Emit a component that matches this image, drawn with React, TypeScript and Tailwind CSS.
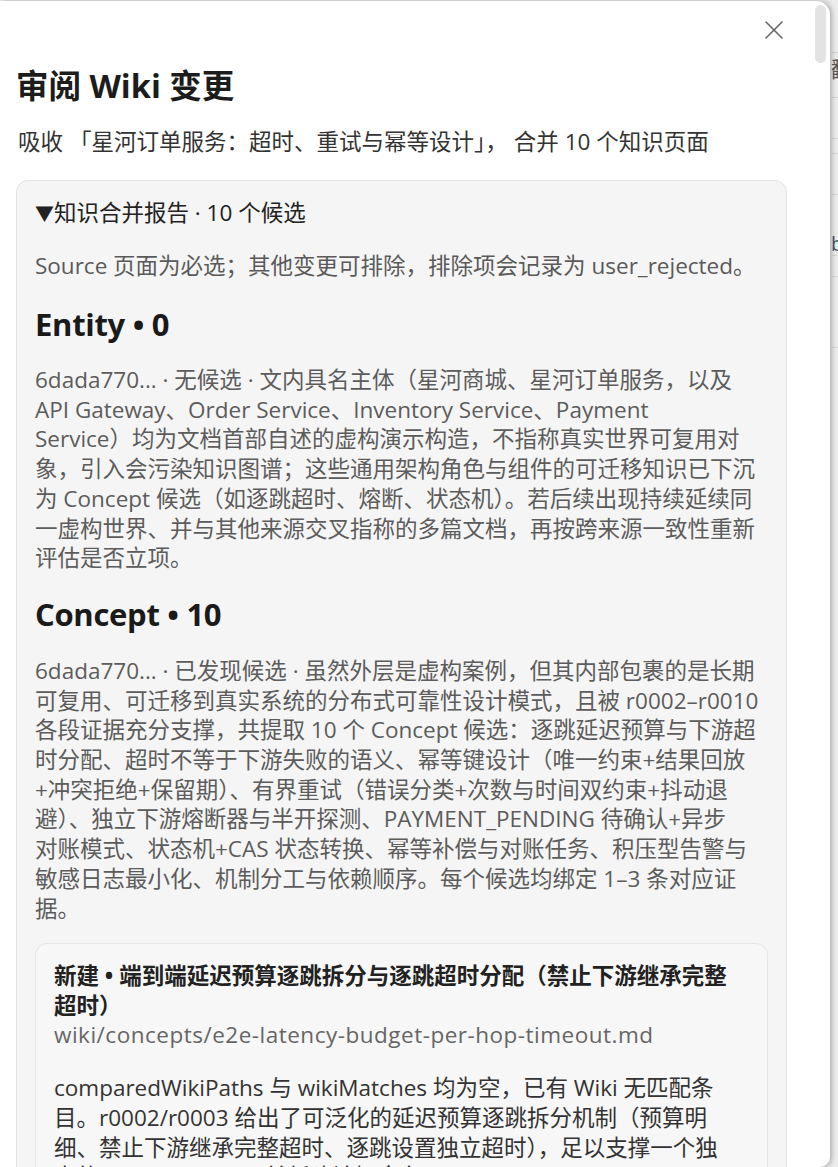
import React from "react";

const FONT = {
  fontFamily: '"Open Sans", "Noto Sans CJK SC", sans-serif',
};

function Lines({ lines, className }: { lines: string[]; className?: string }) {
  return (
    <div className={className}>
      {lines.map((l, i) => (
        <span key={i} className="block whitespace-nowrap">
          {l}
        </span>
      ))}
    </div>
  );
}

const p1 = [
  "6dada770... · 无候选 · 文内具名主体（星河商城、星河订单服务，以及",
  "API Gateway、Order Service、Inventory Service、Payment",
  "Service）均为文档首部自述的虚构演示构造，不指称真实世界可复用对",
  "象，引入会污染知识图谱；这些通用架构角色与组件的可迁移知识已下沉",
  "为 Concept 候选（如逐跳超时、熔断、状态机）。若后续出现持续延续同",
  "一虚构世界、并与其他来源交叉指称的多篇文档，再按跨来源一致性重新",
  "评估是否立项。",
];

const p2 = [
  "6dada770... · 已发现候选 · 虽然外层是虚构案例，但其内部包裹的是长期",
  "可复用、可迁移到真实系统的分布式可靠性设计模式，且被 r0002–r0010",
  "各段证据充分支撑，共提取 10 个 Concept 候选：逐跳延迟预算与下游超",
  "时分配、超时不等于下游失败的语义、幂等键设计（唯一约束+结果回放",
  "+冲突拒绝+保留期）、有界重试（错误分类+次数与时间双约束+抖动退",
  "避）、独立下游熔断器与半开探测、PAYMENT_PENDING 待确认+异步",
  "对账模式、状态机+CAS 状态转换、幂等补偿与对账任务、积压型告警与",
  "敏感日志最小化、机制分工与依赖顺序。每个候选均绑定 1–3 条对应证",
  "据。",
];

const p3 = [
  "comparedWikiPaths 与 wikiMatches 均为空，已有 Wiki 无匹配条",
  "目。r0002/r0003 给出了可泛化的延迟预算逐跳拆分机制（预算明",
  "细、禁止下游继承完整超时、逐跳设置独立超时），足以支撑一个独",
  "立的 Concept 页面，并新建该概念条目。",
];

export default function App() {
  return (
    <div
      className="relative w-[838px] h-[1167px] overflow-hidden bg-[#e9e9e9]"
      style={FONT}
    >
      {/* background page remnants */}
      <div className="absolute left-[832px] top-0 w-[6px] h-full bg-[#ececec]">
        <div className="h-[1px] bg-[#d0d0d0] mt-[52px]" />
        <div className="h-[1px] bg-[#d0d0d0] mt-[44px]" />
        <div className="h-[1px] bg-[#d8d8d8] mt-[40px]" />
        <div className="h-[1px] bg-[#d8d8d8] mt-[14px]" />
        <div className="h-[1px] bg-[#d8d8d8] mt-[40px]" />
        <div className="h-[1px] bg-[#d8d8d8] mt-[60px]" />
        <div className="h-[1px] bg-[#d8d8d8] mt-[20px]" />
        <div className="h-[1px] bg-[#d8d8d8] mt-[70px]" />
      </div>
      <span className="absolute left-[831px] top-[56px] text-[22px] leading-[24px] text-[#555]">
        翻
      </span>
      <span className="absolute left-[831px] top-[232px] text-[20px] leading-[24px] text-[#4a5568]">
        b
      </span>

      {/* dialog */}
      <div className="absolute left-0 top-[1px] w-[830px] h-[1166px] bg-white rounded-tr-[14px] rounded-br-[10px] shadow-[2px_0_5px_rgba(0,0,0,0.25)] overflow-hidden">
        {/* scrollbar thumb */}
        <div className="absolute right-[4px] top-[4px] w-[11px] h-[58px] rounded-full bg-[#e3e3e3]" />

        {/* close */}
        <button className="absolute left-[764px] top-[19px] w-[20px] h-[20px] flex items-center justify-center">
          <svg width="20" height="20" viewBox="0 0 20 20" fill="none">
            <path
              d="M2 2 L18 18 M18 2 L2 18"
              stroke="#666"
              strokeWidth="1.6"
              strokeLinecap="round"
            />
          </svg>
        </button>

        <div className="pl-[18px] pr-[43px] pt-[66px]">
          <h1 className="text-[32.5px] leading-[38px] font-bold text-[#1c1c1c] ml-[-2px]">
            审阅 Wiki 变更
          </h1>
          <p className="mt-[22px] text-[22.5px] leading-[30px] text-[#333] whitespace-nowrap">
            吸收<span className="ml-[6px]">「星河订单服务：超时、重试与幂等设计」，</span>
            <span className="ml-[6px]">合并 10 个知识页面</span>
          </p>

          <div className="mt-[23px] ml-[-2px] rounded-[12px] border border-[#e3e3e3] bg-[#f5f5f5] pl-[18px] pr-[18px] pt-[17px] pb-[40px]">
            <div className="text-[22.5px] leading-[30px] text-[#222] whitespace-nowrap">
              <span className="text-[19px]">▼</span>知识合并报告 · 10 个候选
            </div>
            <p className="mt-[22px] text-[22.5px] leading-[30px] text-[#5a5a5a] whitespace-nowrap">
              Source 页面为必选；其他变更可排除，排除项会记录为 user_rejected。
            </p>

            <h3 className="mt-[23px] text-[31px] leading-[40px] font-bold text-[#1a1a1a] tracking-[-0.3px]">
              Entity • 0
            </h3>
            <Lines
              lines={p1}
              className="mt-[21px] text-[22.5px] leading-[29.7px] text-[#5c5c5c]"
            />

            <h3 className="mt-[21px] text-[31px] leading-[40px] font-bold text-[#1a1a1a] tracking-[-0.3px]">
              Concept • 10
            </h3>
            <Lines
              lines={p2}
              className="mt-[22px] text-[22.5px] leading-[29.7px] text-[#5c5c5c]"
            />

            <div className="mt-[20px] rounded-[12px] border border-[#e6e6e6] bg-[#f7f7f7] pl-[18px] pr-[18px] pt-[17px] pb-[20px]">
              <Lines
                lines={[
                  "新建 • 端到端延迟预算逐跳拆分与逐跳超时分配（禁止下游继承完整",
                  "超时）",
                ]}
                className="text-[22.5px] leading-[30px] font-bold text-[#222]"
              />
              <div className="mt-[-1px] text-[22.5px] leading-[30px] text-[#666] whitespace-nowrap tracking-[0.5px]">
                wiki/concepts/e2e-latency-budget-per-hop-timeout.md
              </div>
              <Lines
                lines={p3}
                className="mt-[23px] text-[22.5px] leading-[29.7px] text-[#333]"
              />
            </div>
          </div>
        </div>
      </div>
    </div>
  );
}
